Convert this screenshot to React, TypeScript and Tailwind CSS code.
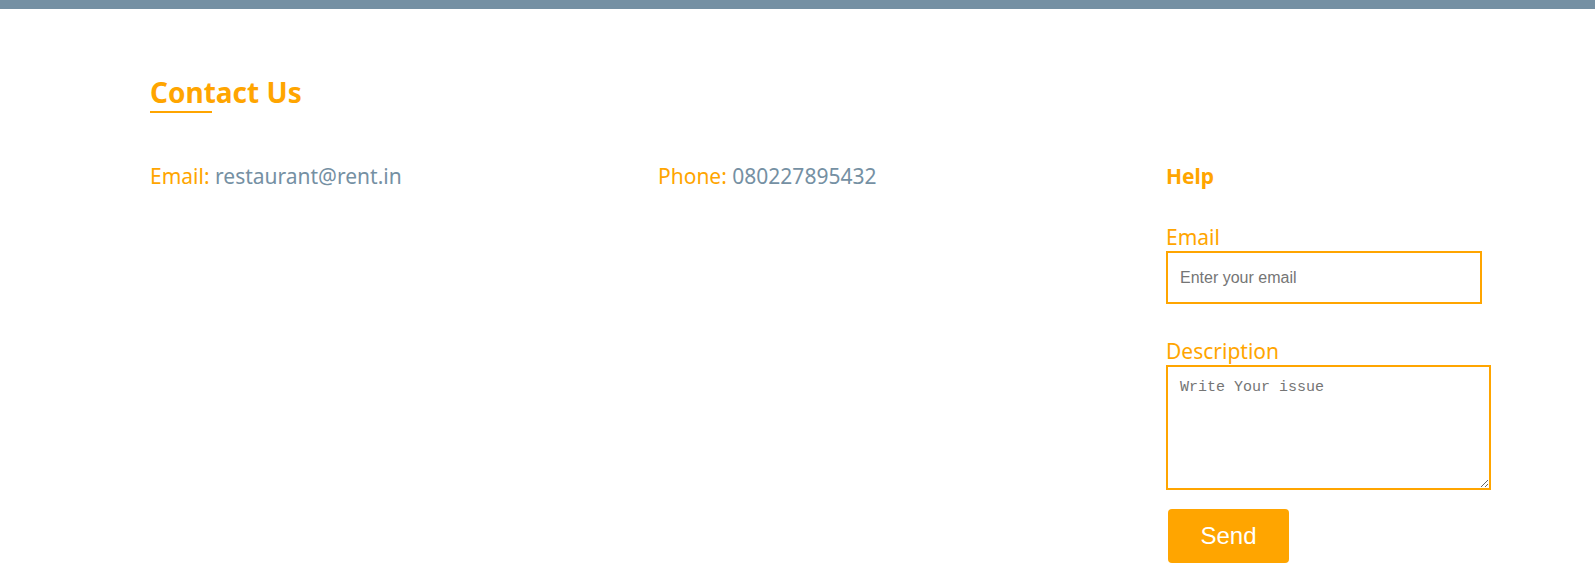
import React from "react";

const App: React.FC = () => {
  return (
    <div className="min-h-[577px] bg-white font-['Noto_Sans',sans-serif]">
      {/* Top strip */}
      <div className="h-[9px] bg-[#7590a3]" />

      <section className="pl-[150px] pt-[64px]">
        <h2 className="text-[28px] leading-[38px] font-bold text-[#ffa500]">
          Contact Us
        </h2>
        <div className="h-[2px] w-[62px] bg-[#ffa500]" />

        <div className="mt-[49px] grid grid-cols-[508px_508px_auto] text-[21px] leading-[28px]">
          <p className="text-[#ffa500]">
            Email: <span className="text-[#7590a3]">restaurant@rent.in</span>
          </p>
          <p className="text-[#ffa500]">
            Phone: <span className="text-[#7590a3]">080227895432</span>
          </p>

          {/* Help form */}
          <div className="flex flex-col items-start">
            <h3 className="font-bold text-[#ffa500]">Help</h3>

            <label className="mt-[33px] text-[#ffa500]">Email</label>
            <input
              type="email"
              placeholder="Enter your email"
              className="h-[53px] w-[316px] border-2 border-[#ffa500] px-3 font-['Liberation_Sans',sans-serif] text-[16px] text-gray-700 outline-none placeholder:text-[#757575]"
            />

            <label className="mt-[33px] text-[#ffa500]">Description</label>
            <textarea
              placeholder="Write Your issue"
              className="h-[125px] w-[325px] border-2 border-[#ffa500] px-3 pt-[12px] font-['Liberation_Mono',monospace] text-[15px] leading-[18px] text-gray-700 outline-none placeholder:text-[#757575]"
            />

            <button className="mt-[19px] ml-[2px] h-[54px] w-[121px] rounded bg-[#ffa500] font-['Liberation_Sans',sans-serif] text-[24px] text-white">
              Send
            </button>
          </div>
        </div>
      </section>
    </div>
  );
};

export default App;
